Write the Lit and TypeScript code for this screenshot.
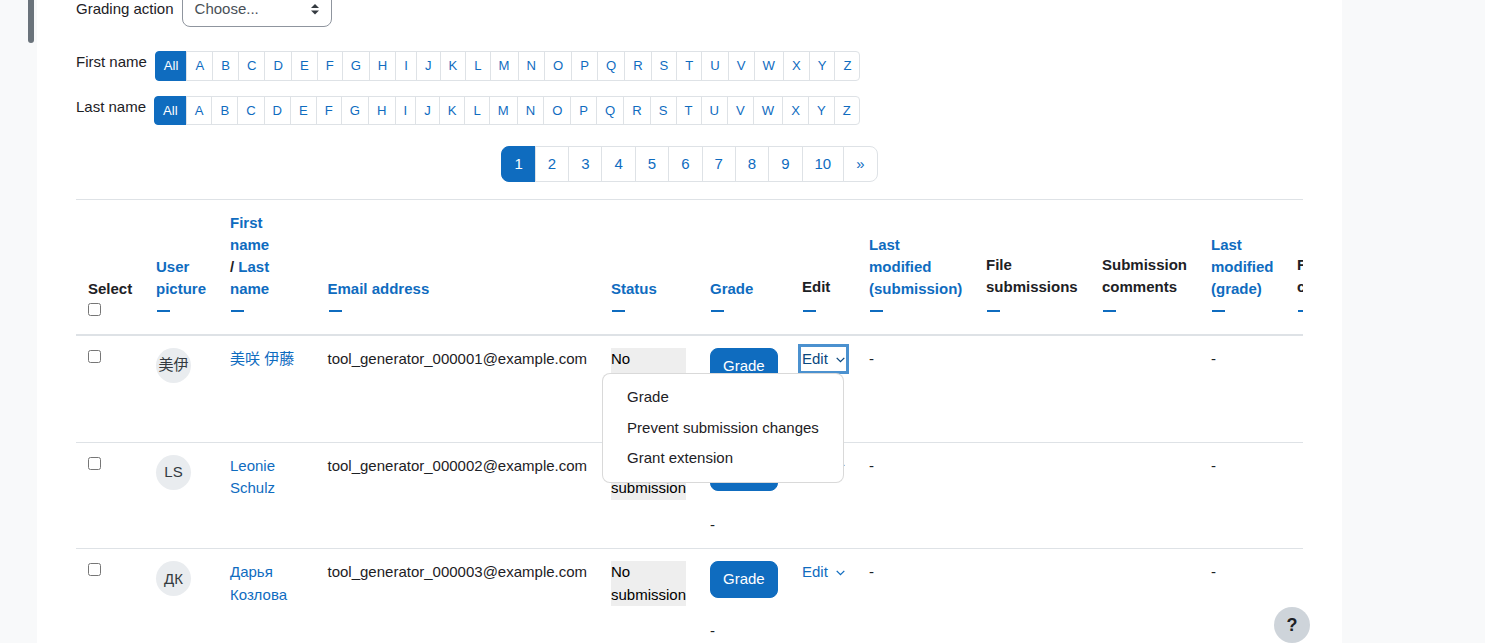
import { LitElement, html, css, svg } from "lit";
import { customElement } from "lit/decorators.js";

const LETTERS = "ABCDEFGHIJKLMNOPQRSTUVWXYZ".split("");
const WIDTHS = [68, 74, 97.5, 283.5, 99, 92, 67, 117, 116, 109, 86, 120];

const chevron = svg`<svg class="chev" width="9" height="6" viewBox="0 0 9 6" fill="none" stroke="currentColor" stroke-width="1.3"><path d="M.7.9 4.5 4.7 8.3.9"/></svg>`;
const sortIcon = svg`<svg width="8" height="11" viewBox="0 0 8 11" fill="#343a40"><path d="M4 0 8 4H0zM0 6.5h8L4 10.5z"/></svg>`;

const ROWS = [
  { initials: "美伊", name: "美咲 伊藤", email: "tool_generator_000001@example.com", open: true },
  { initials: "LS", name: "Leonie Schulz", email: "tool_generator_000002@example.com", open: false },
  { initials: "ДК", name: "Дарья Козлова", email: "tool_generator_000003@example.com", open: false },
];

@customElement("app-root")
export class AppRoot extends LitElement {
  static styles = css`
    :host {
      display: block;
      height: 643px;
      overflow: hidden;
      position: relative;
      background: #f8f9fa;
      padding-left: 37px;
      font: 15px/22.5px "Liberation Sans", "Noto Sans CJK JP", sans-serif;
      color: #1d2125;
      box-sizing: border-box;
    }
    * { box-sizing: border-box; }
    a { color: #0f6cbf; text-decoration: none; }
    .thumb {
      position: absolute; left: 28px; top: -10px;
      width: 6px; height: 53px; border-radius: 3px; background: #6a737b;
    }
    .main { width: 1305px; height: 680px; background: #fff; padding: 0 39px; }
    .form-row { display: flex; align-items: center; gap: 8px; margin-top: -9.5px; margin-bottom: 24px; }
    .form-row > span { position: relative; top: 0.5px; }
    .select {
      width: 150px; height: 36.5px; border: 1px solid #8f959e; border-radius: 8px;
      display: flex; align-items: center; justify-content: space-between;
      padding: 0 12px 0 12px; color: #495057;
    }
    .select svg { display: block; margin-top: 1px; }
    .alpha { display: flex; gap: 8px; align-items: flex-start; margin-bottom: 15px; }
    .alpha.last { margin-bottom: 20.5px; }
    .bar { display: flex; font-size: 13.125px; line-height: 19.7px; }
    .bar a {
      padding: 4px 8px; border: 1px solid #dee2e6; margin-left: -1px; background: #fff;
    }
    .bar a:first-child { margin-left: 0; border-radius: 4px 0 0 4px; }
    .bar a:last-child { border-radius: 0 4px 4px 0; }
    .bar a.on, .pages a.on { background: #0f6cbf; border-color: #0f6cbf; color: #fff; }
    .pages { display: flex; justify-content: center; margin-bottom: 16.5px; }
    .pages a { padding: 6px 12px; border: 1px solid #dee2e6; margin-left: -1px; background: #fff; }
    .pages a:first-child { margin-left: 0; border-radius: 8px 0 0 8px; }
    .pages a:last-child { border-radius: 0 8px 8px 0; }
    .wrap { overflow: hidden; width: 1227px; height: 500px; position: relative; }
    table { border-collapse: collapse; table-layout: fixed; width: 1329px; }
    th, td { padding: 12px; text-align: left; }
    thead th { vertical-align: bottom; font-weight: 700; line-height: 22px; border-top: 1px solid #dee2e6; border-bottom: 2px solid #dee2e6; }
    tbody td { vertical-align: top; border-top: 1px solid #dee2e6; }
    tbody tr:first-child td { border-top: 0; padding-bottom: 12.5px; }
    .dash { display: block; height: 22px; padding-top: 10px; }
    .dash.plain { height: 23.5px; padding-top: 11.5px; }
    .dash::before { content: ""; display: block; width: 13px; height: 2px; background: #0f6cbf; margin-left: 1px; }
    input { display: block; width: 13px; height: 13px; margin: 2px 0 0; }
    .head-check { margin: 3px 0 6px; }
    .avatar {
      width: 35px; height: 35px; border-radius: 50%; background: #e9ecef; color: #343a40;
      display: flex; align-items: center; justify-content: center; font-size: 15px;
    }
    .status { background: #eee; color: #000; }
    .btn {
      display: inline-block; padding: 6px 12px; border: 1px solid #0f6cbf; border-radius: 8px;
      background: #0f6cbf; color: #fff; vertical-align: top;
    }
    .blank { height: 22.5px; }
    .dd { position: relative; display: inline-flex; align-items: center; gap: 8px; white-space: nowrap; }
    .dd a { display: inline-flex; align-items: center; gap: 8px; }
    .dd a.focus {
      color: #0a477e;
      box-shadow: 0 0 0 1px #fff, 0 0 0 4px #4b91cf;
    }
    .chev { display: block; margin-top: 1px; }
    .menu {
      position: absolute; top: 25px; right: 1px; z-index: 5;
      background: #fff; border: 1px solid rgba(0, 0, 0, .15); border-radius: 8px; padding: 8.5px 0;
    }
    .menu div { padding: 4px 24px; white-space: nowrap; }
    .help {
      position: absolute; left: 1274px; top: 607px; width: 36px; height: 36px; border-radius: 50%;
      background: #ced4da; color: #1d2125; font-weight: 700; font-size: 18px;
      display: flex; align-items: center; justify-content: center;
    }
  `;

  private head(label: unknown, link = true) {
    return html`<th>${link ? html`<a href="#">${label}</a>` : label}<span class="dash ${link ? "" : "plain"}"></span></th>`;
  }

  render() {
    return html`
      <div class="thumb"></div>
      <div class="main">
        <div class="form-row">
          <span>Grading action</span>
          <div class="select"><span>Choose...</span>${sortIcon}</div>
        </div>
        <div class="alpha">
          <span>First name</span>
          <div class="bar"><a class="on" href="#">All</a>${LETTERS.map((l) => html`<a href="#">${l}</a>`)}</div>
        </div>
        <div class="alpha last">
          <span>Last name</span>
          <div class="bar"><a class="on" href="#">All</a>${LETTERS.map((l) => html`<a href="#">${l}</a>`)}</div>
        </div>
        <div class="pages">
          ${["1", "2", "3", "4", "5", "6", "7", "8", "9", "10", "»"].map(
            (p, i) => html`<a class=${i === 0 ? "on" : ""} href="#">${p}</a>`
          )}
        </div>
        <div class="wrap">
          <table>
            <colgroup>${WIDTHS.map((w) => html`<col style="width:${w}px" />`)}</colgroup>
            <thead>
              <tr>
                <th>Select<input class="head-check" type="checkbox" /></th>
                ${this.head("User picture")}
                <th><a href="#">First name</a><br />/ <a href="#">Last name</a><span class="dash"></span></th>
                ${this.head("Email address")}
                ${this.head("Status")}
                ${this.head("Grade")}
                ${this.head("Edit", false)}
                ${this.head("Last modified (submission)")}
                ${this.head("File submissions", false)}
                ${this.head("Submission comments", false)}
                ${this.head("Last modified (grade)")}
                ${this.head("Feedback comments", false)}
              </tr>
            </thead>
            <tbody>
              ${ROWS.map(
                (r) => html`
                  <tr>
                    <td><input type="checkbox" /></td>
                    <td><div class="avatar">${r.initials}</div></td>
                    <td><a href="#">${r.name}</a></td>
                    <td>${r.email}</td>
                    <td><div class="status">No submission</div></td>
                    <td><a class="btn" href="#">Grade</a><div class="blank"></div><div>-</div></td>
                    <td>
                      <span class="dd">
                        <a class=${r.open ? "focus" : ""} href="#">Edit ${chevron}</a>
                        ${r.open
                          ? html`<div class="menu">
                              <div>Grade</div>
                              <div>Prevent submission changes</div>
                              <div>Grant extension</div>
                            </div>`
                          : ""}
                      </span>
                    </td>
                    <td>-</td>
                    <td></td>
                    <td></td>
                    <td>-</td>
                    <td></td>
                  </tr>
                `
              )}
            </tbody>
          </table>
        </div>
      </div>
      <div class="help">?</div>
    `;
  }
}
